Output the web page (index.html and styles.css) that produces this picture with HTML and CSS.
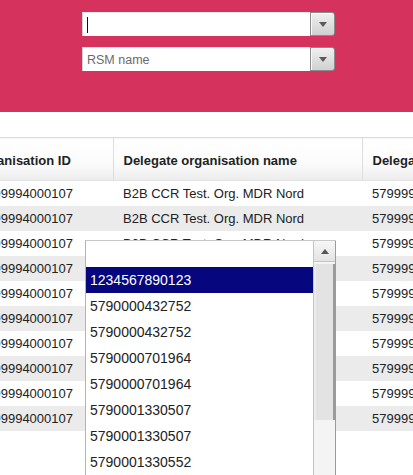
FILE: index.html
```html
<!DOCTYPE html>
<html lang="en">
<head>
    <meta charset="UTF-8">
    <title>Delegations</title>
    <link rel="stylesheet" href="styles.css">
</head>
<body>
    <div class="filter-bar">
        <div class="combo">
            <div class="combo-input"><span class="caret"></span></div>
            <div class="combo-btn"><span class="arrow-down"></span></div>
        </div>
        <div class="combo">
            <div class="combo-input placeholder">RSM name</div>
            <div class="combo-btn"><span class="arrow-down"></span></div>
        </div>
    </div>

    <div class="grid-wrap">
        <table class="grid">
            <colgroup>
                <col class="col-id">
                <col class="col-name">
                <col class="col-gln">
            </colgroup>
            <thead>
                <tr>
                    <th>Organisation ID</th>
                    <th>Delegate organisation name</th>
                    <th>Delegate organisation ID</th>
                </tr>
            </thead>
            <tbody>
                <tr><td>5799994000107</td><td>B2B CCR Test. Org. MDR Nord</td><td>5799990000014</td></tr>
                <tr><td>5799994000107</td><td>B2B CCR Test. Org. MDR Nord</td><td>5799990000014</td></tr>
                <tr><td>5799994000107</td><td>B2B CCR Test. Org. MDR Nord</td><td>5799990000014</td></tr>
                <tr><td>5799994000107</td><td>B2B CCR Test. Org. MDR Nord</td><td>5799990000014</td></tr>
                <tr><td>5799994000107</td><td>B2B CCR Test. Org. MDR Nord</td><td>5799990000014</td></tr>
                <tr><td>5799994000107</td><td>B2B CCR Test. Org. MDR Nord</td><td>5799990000014</td></tr>
                <tr><td>5799994000107</td><td>B2B CCR Test. Org. MDR Nord</td><td>5799990000014</td></tr>
                <tr><td>5799994000107</td><td>B2B CCR Test. Org. MDR Nord</td><td>5799990000014</td></tr>
                <tr><td>5799994000107</td><td>B2B CCR Test. Org. MDR Nord</td><td>5799990000014</td></tr>
                <tr><td>5799994000107</td><td>B2B CCR Test. Org. MDR Nord</td><td>5799990000014</td></tr>
            </tbody>
        </table>
    </div>

    <!-- open dropdown of the first combo -->
    <div class="dropdown">
        <ul class="options">
            <li></li>
            <li class="selected">1234567890123</li>
            <li>5790000432752</li>
            <li>5790000432752</li>
            <li>5790000701964</li>
            <li>5790000701964</li>
            <li>5790001330507</li>
            <li>5790001330507</li>
            <li>5790001330552</li>
            <li>5790001330552</li>
        </ul>
        <div class="scrollbar">
            <div class="scroll-up"><span class="arrow-up"></span></div>
            <div class="scroll-thumb"></div>
        </div>
    </div>
</body>
</html>
```

FILE: styles.css
```css
* {
    margin: 0;
    padding: 0;
    box-sizing: border-box;
}

body {
    font-family: "Liberation Sans", Arial, sans-serif;
    background: #fff;
    color: #222;
    overflow: hidden;
    position: relative;
    height: 475px;
}

/* Pink filter bar */
.filter-bar {
    height: 112px;
    background: #d5325d;
    padding: 12px 0 0 82px;
    display: flex;
    flex-direction: column;
    gap: 11px;
}

.combo {
    display: flex;
    width: 253px;
    height: 24px;
}

.combo-input {
    flex: 1;
    background: #fff;
    border-top: 1px solid #e6e6e6;
    border-left: 1px solid #d0d0d0;
    display: flex;
    align-items: center;
    padding-left: 4px;
    font-size: 12.5px;
}

.combo-input.placeholder {
    color: #6b6b6b;
}

.caret {
    width: 1px;
    height: 16px;
    background: #111;
}

.combo-btn {
    width: 25px;
    border: 1px solid #8c8c8c;
    border-radius: 0 3px 3px 0;
    background: linear-gradient(#f0f0f0, #d0d0d0);
    box-shadow: inset 1px 1px 0 #fafafa;
    display: flex;
    align-items: center;
    justify-content: center;
}

.arrow-down {
    width: 0;
    height: 0;
    border-left: 4px solid transparent;
    border-right: 4px solid transparent;
    border-top: 5px solid #5a5a5a;
}

/* Data grid */
.grid-wrap {
    margin-top: 25px;
    margin-left: -41px;
    width: 600px;
}

.grid {
    border-collapse: collapse;
    table-layout: fixed;
    width: 603px;
    font-size: 13px;
}

.col-id { width: 154px; }
.col-name { width: 249px; }
.col-gln { width: 200px; }

.grid th {
    height: 43px;
    padding: 3px 10px 0;
    text-align: left;
    font-weight: bold;
    white-space: nowrap;
    overflow: hidden;
    background: linear-gradient(#ffffff 0%, #fbfbfb 60%, #ececec 100%);
    border-top: 1px solid #dcdcdc;
    border-bottom: 1px solid #e2e2e2;
    border-right: 1px solid #dedede;
}

.grid th:first-child {
    padding-left: 15px;
}

.grid td {
    height: 25px;
    padding: 0 10px;
    white-space: nowrap;
    overflow: hidden;
}

.grid td:first-child {
    padding-left: 20px;
}

.grid tbody tr:nth-child(even) td {
    background: #ebebeb;
}

/* Open dropdown list */
.dropdown {
    position: absolute;
    left: 85px;
    top: 240px;
    width: 251px;
    height: 260px;
    background: #fff;
    border-top: 1px solid #c8c8c8;
    border-left: 1px solid #b4b4b4;
    display: flex;
}

.options {
    list-style: none;
    flex: 1;
    font-size: 14px;
    color: #222;
}

.options li {
    height: 26px;
    line-height: 26px;
    padding-left: 4px;
}

.options li.selected {
    background: #06067f;
    color: #fff;
}

.scrollbar {
    width: 23px;
    border-left: 1px solid #c4c4c4;
    border-right: 1px solid #9c9c9c;
    background: #f4f4f4;
    display: flex;
    flex-direction: column;
}

.scroll-up {
    height: 21px;
    background: linear-gradient(#f6f6f6, #e4e4e4);
    border-bottom: 1px solid #c4c4c4;
    display: flex;
    align-items: center;
    justify-content: center;
}

.arrow-up {
    width: 0;
    height: 0;
    border-left: 4px solid transparent;
    border-right: 4px solid transparent;
    border-bottom: 5px solid #555;
}

.scroll-thumb {
    margin-top: 2px;
    height: 156px;
    background: #e3e3e3;
    border-left: 2px solid #ececec;
    border-right: 2px solid #9a9a9a;
}
```
